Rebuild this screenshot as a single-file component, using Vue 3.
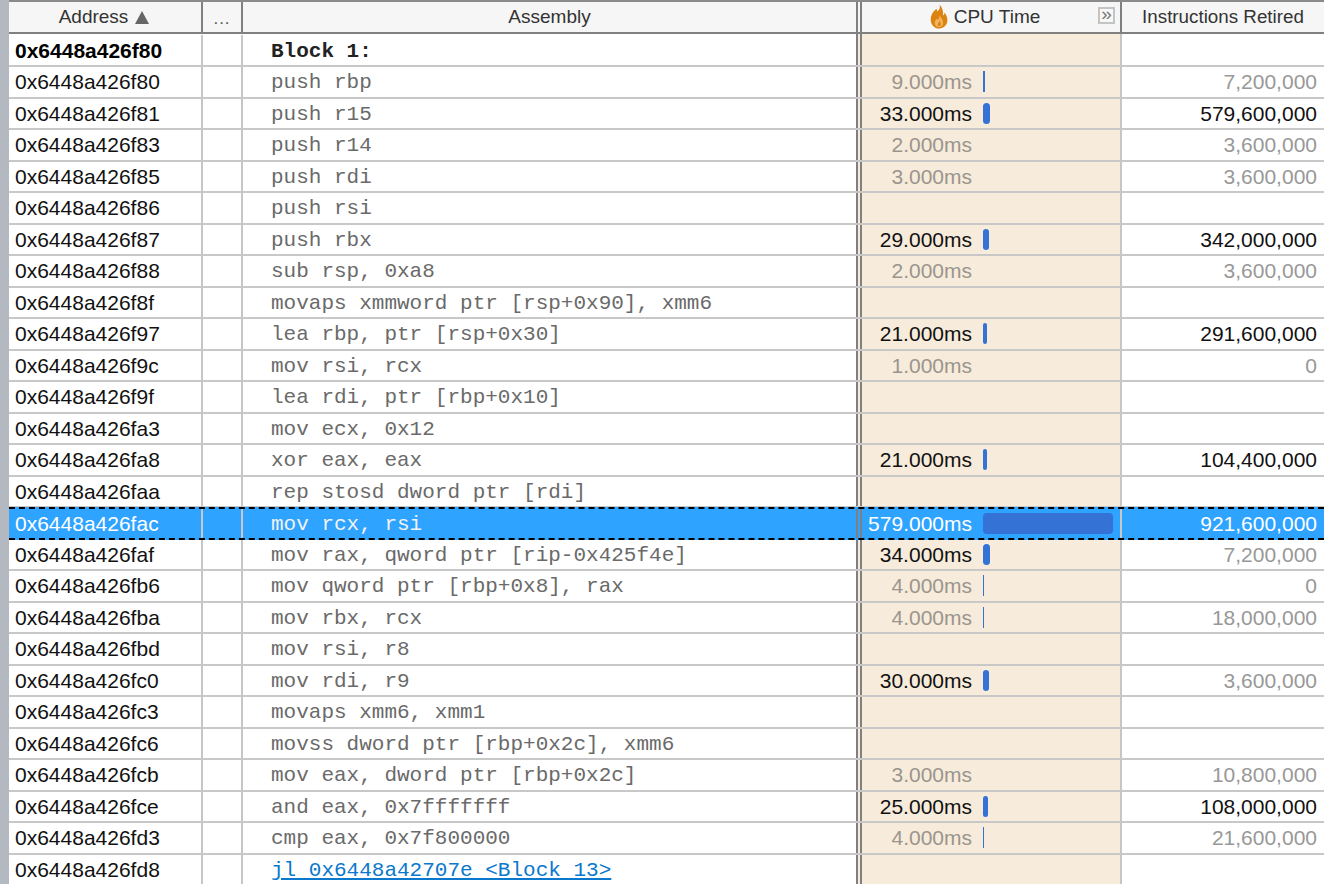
<script setup>
const d = (addr, asm, cpu, bar, hot, ins, insHot, extra = {}) => ({ addr, asm, cpu, bar, hot, ins, insHot, ...extra })
const rows = [
  d('0x6448a426f80', 'Block 1:', '', 0, false, '', false, { block: true }),
  d('0x6448a426f80', 'push rbp', '9.000ms', 2, false, '7,200,000', false),
  d('0x6448a426f81', 'push r15', '33.000ms', 7, true, '579,600,000', true),
  d('0x6448a426f83', 'push r14', '2.000ms', 0, false, '3,600,000', false),
  d('0x6448a426f85', 'push rdi', '3.000ms', 0, false, '3,600,000', false),
  d('0x6448a426f86', 'push rsi', '', 0, false, '', false),
  d('0x6448a426f87', 'push rbx', '29.000ms', 6, true, '342,000,000', true),
  d('0x6448a426f88', 'sub rsp, 0xa8', '2.000ms', 0, false, '3,600,000', false),
  d('0x6448a426f8f', 'movaps xmmword ptr [rsp+0x90], xmm6', '', 0, false, '', false),
  d('0x6448a426f97', 'lea rbp, ptr [rsp+0x30]', '21.000ms', 4, true, '291,600,000', true),
  d('0x6448a426f9c', 'mov rsi, rcx', '1.000ms', 0, false, '0', false),
  d('0x6448a426f9f', 'lea rdi, ptr [rbp+0x10]', '', 0, false, '', false),
  d('0x6448a426fa3', 'mov ecx, 0x12', '', 0, false, '', false),
  d('0x6448a426fa8', 'xor eax, eax', '21.000ms', 4, true, '104,400,000', true),
  d('0x6448a426faa', 'rep stosd dword ptr [rdi]', '', 0, false, '', false),
  d('0x6448a426fac', 'mov rcx, rsi', '579.000ms', 130, true, '921,600,000', true, { selected: true }),
  d('0x6448a426faf', 'mov rax, qword ptr [rip-0x425f4e]', '34.000ms', 7, true, '7,200,000', false),
  d('0x6448a426fb6', 'mov qword ptr [rbp+0x8], rax', '4.000ms', 1, false, '0', false),
  d('0x6448a426fba', 'mov rbx, rcx', '4.000ms', 1, false, '18,000,000', false),
  d('0x6448a426fbd', 'mov rsi, r8', '', 0, false, '', false),
  d('0x6448a426fc0', 'mov rdi, r9', '30.000ms', 6, true, '3,600,000', false),
  d('0x6448a426fc3', 'movaps xmm6, xmm1', '', 0, false, '', false),
  d('0x6448a426fc6', 'movss dword ptr [rbp+0x2c], xmm6', '', 0, false, '', false),
  d('0x6448a426fcb', 'mov eax, dword ptr [rbp+0x2c]', '3.000ms', 0, false, '10,800,000', false),
  d('0x6448a426fce', 'and eax, 0x7fffffff', '25.000ms', 5, true, '108,000,000', true),
  d('0x6448a426fd3', 'cmp eax, 0x7f800000', '4.000ms', 1, false, '21,600,000', false),
  d('0x6448a426fd8', 'jl 0x6448a42707e <Block 13>', '', 0, false, '', false, { link: true }),
]
</script>

<template>
  <div class="page">
    <div class="gutter"></div>
    <div class="grid">
      <div class="head">
        <div class="hc c-addr">Address <span class="tri"></span></div>
        <div class="hc c-dots"><span class="dots">...</span></div>
        <div class="hc c-asm">Assembly</div>
        <div class="hc c-cpu">
          <svg class="flame" width="18" height="25" viewBox="0 0 18 25">
            <path fill="#dd8410" d="M9.5 0.5C10.6 3.6 9.4 5.6 7.6 7.6C7 6.6 6.6 5.8 6.5 4.8C3 7.6 0.6 11.2 0.7 15.4C0.8 20.8 4.4 24.4 9 24.5C13.8 24.6 17.4 21 17.4 16C17.4 13 16.2 10.6 14.6 8.4C14.5 9.8 14 10.8 13 11.6C13.4 7.6 12.6 3.4 9.5 0.5Z"/>
            <path fill="#f0b660" d="M9.4 11.5C9.8 13.6 8.9 14.8 7.7 16C7.2 15.4 7 15 6.9 14.4C5.4 16 4.7 17.6 4.9 19.4C5.2 21.6 6.8 23.1 9 23.1C11.3 23.1 13 21.5 13.1 19.2C13.2 17 11.8 14.2 9.4 11.5Z"/>
            <path fill="#dd8410" d="M9.2 16.5C9.4 17.8 8.7 18.6 8 19.4C7.4 20.4 7.7 22 9.1 22.1C10.6 22.2 11.2 20.8 10.9 19.6C10.7 18.6 10 17.4 9.2 16.5Z"/>
          </svg>
          <span>CPU Time</span>
          <span class="expand">»</span>
        </div>
        <div class="hc c-ins">Instructions Retired</div>
      </div>
      <div
        v-for="(r, i) in rows"
        :key="i"
        class="row"
        :class="{ selected: r.selected, block: r.block }"
      >
        <div class="cell c-addr addr">{{ r.addr }}</div>
        <div class="cell c-dots"></div>
        <div class="cell c-asm asm" :class="{ link: r.link }">{{ r.asm }}</div>
        <div class="cell c-cpu cpu">
          <span class="val" :class="{ dim: !r.hot }">{{ r.cpu }}</span>
          <span v-if="r.bar" class="bar" :class="{ thin: r.bar < 3 }" :style="{ width: r.bar + 'px' }"></span>
        </div>
        <div class="cell c-ins ins" :class="{ dim: !r.insHot }">{{ r.ins }}</div>
      </div>
    </div>
  </div>
</template>

<style>
html, body { margin: 0; overflow: hidden; background: #fff; }
</style>

<style scoped>
.page {
  display: flex;
  height: 884px;
  overflow: hidden;
  background: #fff;
  font-family: "Liberation Sans", Arial, sans-serif;
  font-size: 21px;
  color: #111;
}
.gutter { width: 9px; flex: none; background: #b4b8c0; }
.grid { width: 1315px; flex: none; }
.head, .row {
  display: grid;
  grid-template-columns: 194px 40px 613px 266px 202px;
}
.head {
  height: 34px;
  box-sizing: border-box;
  background: #f6f6f6;
  border-top: 2px solid #8a8a8a;
  border-bottom: 2px solid #808080;
  font-size: 19px;
  color: #333;
}
.hc {
  display: flex;
  align-items: center;
  justify-content: center;
  box-sizing: border-box;
  border-right: 2px solid #808080;
  gap: 7px;
  white-space: nowrap;
}
.hc.c-addr { padding-right: 2px; }
.tri {
  width: 0;
  height: 0;
  border-left: 7px solid transparent;
  border-right: 7px solid transparent;
  border-bottom: 13px solid #666;
}
.dots { position: relative; top: 2px; color: #555; font-size: 17px; letter-spacing: 1px; }
.hc.c-asm { border-right: none; }
.c-cpu { position: relative; }
.hc.c-cpu { border-left: 6px double #808080; padding-right: 12px; gap: 6px; }
.hc.c-ins { border-right: 0; font-size: 18.8px; }
.flame { flex: none; margin-top: -1px; }
.expand {
  position: absolute;
  right: 5px;
  top: 5px;
  width: 17px;
  height: 17px;
  box-sizing: border-box;
  border: 2px solid #c4c4c4;
  color: #777;
  font-size: 19px;
  line-height: 9px;
  text-align: center;
  background: #f8f8f8;
}
.row {
  height: 31.5px;
  box-sizing: border-box;
  border-bottom: 2px solid #c8c8c8;
  align-items: stretch;
}
.row.block { height: 33px; padding-top: 1px; }
.cell {
  display: flex;
  align-items: center;
  box-sizing: border-box;
  border-right: 2px solid #c6c6c6;
  white-space: pre;
  min-width: 0;
  line-height: 1;
}
.addr { padding-left: 6px; }
.asm {
  padding-left: 28px;
  padding-top: 2px;
  border-right: none;
  font-family: "Liberation Mono", "Courier New", monospace;
  color: #6a6a6a;
  font-weight: 400;
}
.link { color: #0a78cc; text-decoration: underline; }
.cell.cpu {
  background: #f7ebdb;
  border-left: 6px double #808080;
  border-right: 2px solid #c6c6c6;
}
.row.block .cell.cpu { margin-top: -1px; }
.val { width: 110px; flex: none; text-align: right; }
.bar {
  margin-left: 11px;
  height: 21px;
  background: #3472d6;
  border-radius: 4px;
  flex: none;
}
.bar.thin { border-radius: 0; }
.ins { justify-content: flex-end; padding-right: 7px; border-right: 0; }
.dim { color: #989898; }
.cpu .dim { color: #9a958d; }
.block .addr { font-weight: 700; color: #000; }
.block .asm { font-weight: 700; color: #222; }
.row.selected {
  height: 32.5px;
  margin-top: -1px;
  background: #2ea3ff;
  border-top: 2px dashed #000;
  border-bottom: 2px dashed #000;
  color: #fff;
}
.selected .cell { border-right-color: #c8c8c8; }
.selected .asm { color: #f2f2f2; }
.selected .cell.cpu { background: #2ea3ff; }
.selected .val, .selected .ins { color: #fff; }
</style>
